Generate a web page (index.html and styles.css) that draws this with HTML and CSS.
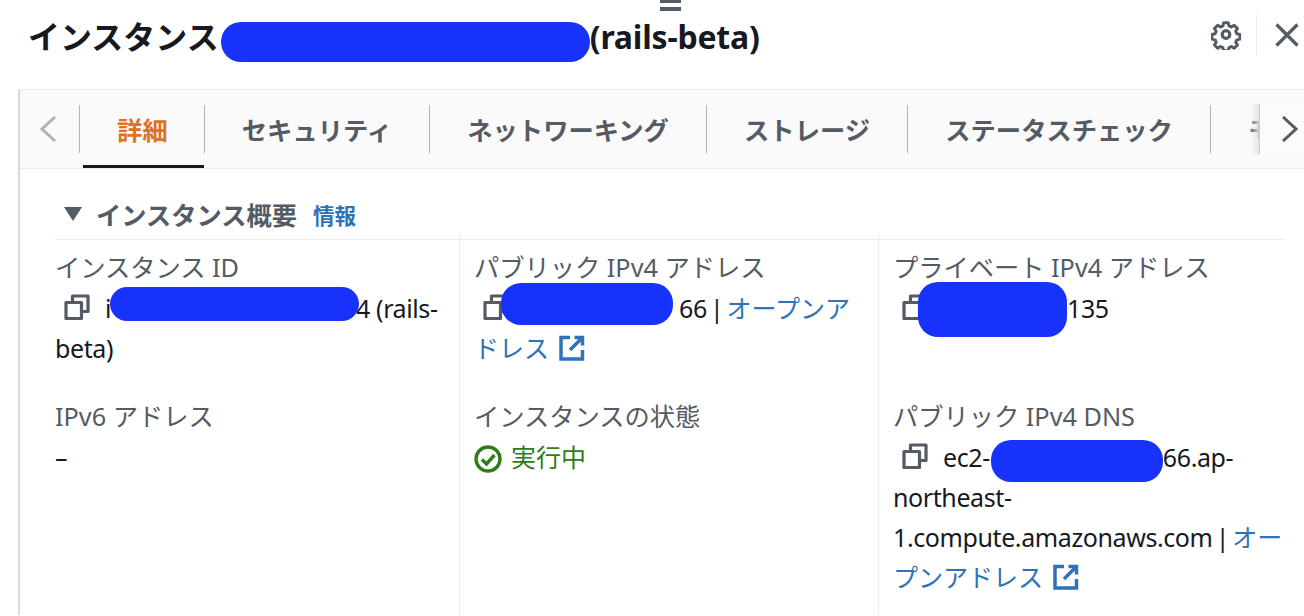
FILE: index.html
```html
<!DOCTYPE html>
<html lang="ja">
<head>
    <meta charset="UTF-8">
    <meta name="viewport" content="width=device-width, initial-scale=1.0">
    <title>インスタンス</title>
    <link rel="stylesheet" href="styles.css">
</head>
<body>
    <div class="drag-handle"></div>
    <header class="header">
        <h1 class="title">インスタンス<span class="redact redact-title"></span><span class="title-name">(rails-beta)</span></h1>
        <div class="header-actions">
            <svg class="icon-gear" viewBox="0 0 30 30" fill="none" stroke="#545b64" stroke-width="3.200" stroke-linejoin="round">
                <path d="M12.500 2.500h5l.8 3.400 2.600 1.100 3-1.900 3.500 3.500-1.900 3 1.100 2.600 3.400.8v5l-3.400.8-1.100 2.600 1.900 3-3.500 3.500-3-1.900-2.600 1.100-.8 3.400h-5l-.8-3.400-2.600-1.100-3 1.900-3.500-3.500 1.900-3-1.100-2.600-3.400-.8v-5l3.400-.8 1.100-2.600-1.900-3 3.500-3.500 3 1.900 2.600-1.100z" transform="translate(1 .5) scale(.93)"/>
                <circle cx="15" cy="14.500" r="3.800"/>
            </svg>
            <span class="action-divider"></span>
            <svg class="icon-close" viewBox="0 0 24 24" fill="none" stroke="#545b64" stroke-width="3.200">
                <path d="M1.500 1.500l21 21M22.500 1.500l-21 21"/>
            </svg>
        </div>
    </header>

    <section class="panel">
        <nav class="tabs">
            <div class="scroll-btn">
                <svg class="chevron" viewBox="0 0 16 26" fill="none" stroke="#aab7b8" stroke-width="3"><path d="M15 1L2 13l13 12"/></svg>
            </div>
            <div class="tab-list">
                <div class="tab tab-active"><span class="tab-label">詳細</span></div>
                <div class="tab"><span class="tab-label">セキュリティ</span></div>
                <div class="tab"><span class="tab-label">ネットワーキング</span></div>
                <div class="tab"><span class="tab-label">ストレージ</span></div>
                <div class="tab"><span class="tab-label">ステータスチェック</span></div>
                <div class="tab"><span class="tab-label">モニタリング</span></div>
            </div>
            <div class="scroll-btn scroll-next">
                <svg class="chevron" viewBox="0 0 16 26" fill="none" stroke="#545b64" stroke-width="3"><path d="M1 1l13 12L1 25"/></svg>
            </div>
        </nav>

        <div class="content">
            <div class="section-head">
                <span class="caret"></span>
                <h2>インスタンス概要</h2>
                <a class="info-link" href="#">情報</a>
            </div>
            <div class="fields">
                <div class="field">
                    <div class="label">インスタンス ID</div>
                    <div class="value"><svg class="icon-copy" viewBox="0 0 26 26"><use href="#copy"/></svg>i<span class="redact redact-id"></span>4 (rails-beta)</div>
                </div>
                <div class="field">
                    <div class="label">パブリック IPv4 アドレス</div>
                    <div class="value"><svg class="icon-copy" viewBox="0 0 26 26"><use href="#copy"/></svg><span class="redact redact-public"></span>66<span class="sep"> | </span><a href="#">オープンアドレス<svg class="icon-ext" viewBox="0 0 26 26"><use href="#ext"/></svg></a></div>
                </div>
                <div class="field">
                    <div class="label">プライベート IPv4 アドレス</div>
                    <div class="value"><svg class="icon-copy" viewBox="0 0 26 26"><use href="#copy"/></svg><span class="redact redact-private"></span>135</div>
                </div>
                <div class="field">
                    <div class="label">IPv6 アドレス</div>
                    <div class="value">–</div>
                </div>
                <div class="field">
                    <div class="label">インスタンスの状態</div>
                    <div class="value status">
                        <svg class="icon-ok" viewBox="0 0 28 28" fill="none" stroke="#2f7d16" stroke-width="3.400"><circle cx="14" cy="14" r="12"/><path d="M8 14.500l4.500 4.500 8-9"/></svg>実行中
                    </div>
                </div>
                <div class="field">
                    <div class="label">パブリック IPv4 DNS</div>
                    <div class="value"><svg class="icon-copy" viewBox="0 0 26 26"><use href="#copy"/></svg>ec2-<span class="redact redact-dns"></span>66.ap-northeast-1.compute.amazonaws.com<span class="sep"> | </span><a href="#">オープンアドレス<svg class="icon-ext" viewBox="0 0 26 26"><use href="#ext"/></svg></a></div>
                </div>
            </div>
        </div>
    </section>

    <svg class="defs" width="0" height="0">
        <symbol id="copy" viewBox="0 0 26 26">
            <path d="M2 8.500h15.500V24.500H2z M8.500 8.500V2h15.500v15.500h-6.500" fill="none" stroke="#545b64" stroke-width="3.200" stroke-linejoin="round"/>
        </symbol>
        <symbol id="ext" viewBox="0 0 26 26">
            <path d="M11 2.500H2V24h21.500V15M15.500 2.500h8v8M23.500 2.500L11 15" fill="none" stroke="#2e73b8" stroke-width="3.500"/>
        </symbol>
    </svg>
</body>
</html>
```

FILE: styles.css
```css
* {
    box-sizing: border-box;
}
html, body {
    height: 616px;
    overflow: hidden;
}
body {
    margin: 0;
    background-color: #fff;
    font-family: 'Noto Sans', 'Noto Sans CJK JP', sans-serif;
    color: #16191f;
}
.defs {
    position: absolute;
}
.drag-handle {
    position: absolute;
    top: 0;
    left: 660px;
    width: 21px;
    height: 11px;
    border-top: 3px solid #545b64;
    border-bottom: 4px solid #545b64;
}
.header {
    height: 89px;
    padding: 0 5px 20px 28px;
    display: flex;
    align-items: center;
    justify-content: space-between;
}
.title {
    margin: 0;
    font-size: 32px;
    font-weight: bold;
    white-space: nowrap;
}
.title-name {
    letter-spacing: -0.2px;
}
.redact {
    display: inline-block;
    vertical-align: middle;
    background-color: #1733fb;
    border-radius: 20px;
    margin-top: -30px;
    margin-bottom: -30px;
    position: relative;
}
.redact-title {
    width: 369px;
    height: 40px;
    top: 2px;
    margin-left: 2px;
}
.redact-id {
    width: 249px;
    height: 34px;
    top: -7px;
    margin-left: -1px;
    margin-right: -3px;
}
.redact-public {
    width: 172px;
    height: 42px;
    top: -7px;
    margin-left: -23px;
    margin-right: 6px;
}
.redact-private {
    width: 149px;
    height: 55px;
    top: -2px;
    margin-left: -25px;
}
.redact-dns {
    width: 172px;
    height: 42px;
    top: 1px;
    margin-left: 1px;
}
.header-actions {
    display: flex;
    align-items: center;
}
.icon-gear {
    width: 30px;
    height: 30px;
}
.action-divider {
    width: 1px;
    height: 42px;
    margin: 0 18px 0 15px;
    background-color: #eaeded;
}
.icon-close {
    width: 24px;
    height: 24px;
}
.panel {
    margin-left: 18px;
    border-left: 2px solid #d5dbdb;
    border-top: 1px solid #eaeded;
}
.tabs {
    height: 79px;
    display: flex;
    background-color: #fafafa;
    border-bottom: 1px solid #eaeded;
}
.scroll-btn {
    width: 59px;
    flex-shrink: 0;
    display: flex;
    align-items: center;
    padding-left: 20px;
}
.scroll-next {
    width: 45px;
    padding-left: 22px;
    margin: 14px 0;
    background-color: #fbfbfb;
    border-left: 1px solid #c5cdcd;
    position: relative;
}
.scroll-next::before {
    content: "";
    position: absolute;
    top: 0;
    bottom: 0;
    left: -10px;
    width: 9px;
    background: linear-gradient(to right, rgba(250, 250, 250, 0), rgba(225, 230, 230, 0.9));
}
.chevron {
    width: 16px;
    height: 26px;
}
.tab-list {
    flex: 1;
    min-width: 0;
    display: flex;
    overflow: hidden;
}
.tab {
    flex-shrink: 0;
    padding-top: 15px;
    position: relative;
}
.tab-label {
    display: block;
    height: 48px;
    padding: 0 37.1px;
    line-height: 50px;
    border-left: 1px solid #aab7b8;
    font-size: 25.3px;
    font-weight: bold;
    color: #545b64;
}
.tab-active .tab-label {
    color: #dd7227;
    padding-right: 36px;
}
.tab-active::after {
    content: "";
    position: absolute;
    left: 4px;
    right: 0;
    bottom: 0;
    height: 3px;
    background-color: #16191f;
}
.content {
    padding: 25px 0 0 35px;
}
.section-head {
    display: flex;
    align-items: center;
    width: 1230px;
    height: 46px;
    padding-left: 9px;
    padding-bottom: 5px;
    border-bottom: 1px solid #eaeded;
}
.section-head h2 {
    margin: 0;
    font-size: 25.25px;
    font-weight: bold;
    color: #545b64;
}
.caret {
    width: 0;
    height: 0;
    margin-right: 14px;
    border-left: 9px solid transparent;
    border-right: 9px solid transparent;
    border-top: 14px solid #545b64;
}
.info-link {
    margin-left: 16px;
    font-size: 21.5px;
    font-weight: bold;
    color: #2e73b8;
    text-decoration: none;
}
.fields {
    display: grid;
    grid-template-columns: 404px 419px 420px;
    grid-template-rows: auto 226px;
}
.field {
    padding: 7px 12px 21px 14px;
    border-left: 1px solid #eaeded;
    position: relative;
}
.field:nth-child(3n+1) {
    padding-left: 0;
    border-left: none;
}
.field:nth-child(n+4) {
    padding-bottom: 0;
}
.field:nth-child(2)::before,
.field:nth-child(3)::before {
    content: "";
    position: absolute;
    left: -1px;
    top: -7px;
    width: 1px;
    height: 7px;
    background-color: #eaeded;
}
.label {
    font-size: 25.25px;
    line-height: 41px;
    color: #545b64;
}
.value {
    font-size: 25px;
    line-height: 40px;
    letter-spacing: -0.4px;
}
.value a {
    color: #2e73b8;
    text-decoration: none;
    letter-spacing: 0;
}
.sep {
    word-spacing: -3px;
}
.icon-copy {
    width: 26px;
    height: 26px;
    margin: 0 15px 0 9px;
    vertical-align: -2px;
}
.icon-ext {
    width: 26px;
    height: 26px;
    margin-left: 10px;
    vertical-align: -3px;
}
.status {
    color: #2f7d16;
    letter-spacing: 0;
}
.icon-ok {
    width: 28px;
    height: 28px;
    margin-right: 9px;
    vertical-align: -6px;
}
```
